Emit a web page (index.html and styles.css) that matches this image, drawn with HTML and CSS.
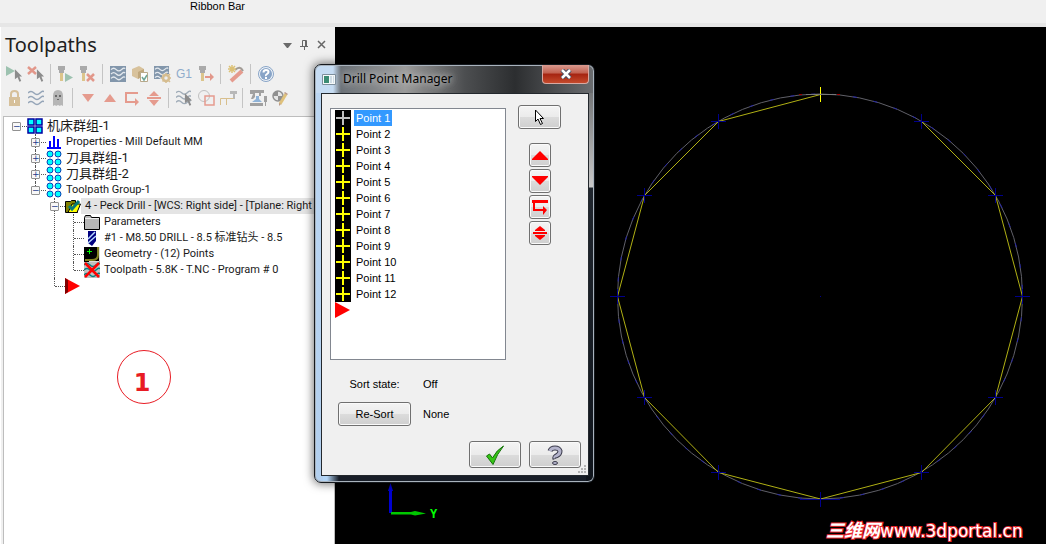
FILE: index.html
```html
<!DOCTYPE html>
<html lang="en">
<head>
<meta charset="utf-8">
<title>Toolpaths</title>
<link rel="stylesheet" href="styles.css">
</head>
<body>
<svg class="defs" aria-hidden="true">
  <defs>
    <symbol id="cursor" viewBox="0 0 10 15"><path d="M1 0v11l3-2 2 5 2-1-2-5h3z"/></symbol>
    <symbol id="mill" viewBox="0 0 8 16"><path fill="#aaa" d="M0 0h7v4H6v3H1V4H0z"/><path fill="#dcc58b" d="M2 7h3v8H2z"/></symbol>
    <symbol id="plus" viewBox="0 0 16 16"><path fill="#000" d="M0 0h16v16H0z"/><path fill="none" stroke="currentColor" stroke-width="2" d="M8 1v14M1 8h14"/></symbol>
    <symbol id="grp" viewBox="0 0 16 16"><g fill="#0ff" stroke="#0a3fb5"><circle cx="4" cy="4" r="3"/><circle cx="12" cy="4" r="3"/><circle cx="4" cy="12" r="3"/><circle cx="12" cy="12" r="3"/></g></symbol>
    <symbol id="waves" viewBox="0 0 16 16"><path fill="none" stroke="currentColor" stroke-width="1.5" d="M0 3q3-3 6 0t6 0t4-1M0 8q3-3 6 0t6 0t4-1M0 13q3-3 6 0t6 0t4-1"/></symbol>
  </defs>
</svg>
<header class="ribbon">Ribbon Bar</header>
<main class="workspace">
  <aside class="panel">
    <div class="panel-head">
      <h1>Toolpaths</h1>
      <div class="panel-tools">
        <button aria-label="Menu"><svg viewBox="0 0 10 10"><path fill="#6a6a6a" d="M0 3h9L5 8H4z"/></svg></button>
        <button aria-label="Pin"><svg viewBox="0 0 10 10"><path fill="none" stroke="#666" d="M2.500 6V.5h4V6M5.500 1v5M0 6.500h8M4.500 7v3"/></svg></button>
        <button aria-label="Close"><svg viewBox="0 0 10 10"><path stroke="#666" stroke-width="1.500" d="M1 1l7 7M8 1L1 8"/></svg></button>
      </div>
    </div>
    <div class="toolbar">
      <button aria-label="Select all"><svg viewBox="0 0 18 18"><path fill="#9dc2b0" d="M1 1l9 5-9 5z"/><use href="#cursor" x="9" y="4" width="9" height="14" fill="#8c8c8c"/></svg></button>
      <button aria-label="Select dirty"><svg viewBox="0 0 18 18"><path stroke="#e2978a" stroke-width="2.500" d="M1 2l8 7M9 2L1 9"/><use href="#cursor" x="9" y="4" width="9" height="14" fill="#8c8c8c"/></svg></button>
      <i></i>
      <button aria-label="Regenerate all"><svg viewBox="0 0 18 18"><use href="#mill" x="1" y="1" width="8" height="16"/><path fill="#9dc2b0" d="M8 8l8 4.500L8 17z"/></svg></button>
      <button aria-label="Regenerate dirty"><svg viewBox="0 0 18 18"><use href="#mill" x="1" y="1" width="8" height="16"/><path stroke="#e2978a" stroke-width="2.500" d="M8 9l7 7M15 9l-7 7"/></svg></button>
      <i></i>
      <button aria-label="Backplot"><svg viewBox="0 0 18 18"><path fill="#8296ab" d="M1 1h16v16H1z"/><use href="#waves" x="1" y="2" width="16" height="14" color="#e4e9ee"/></svg></button>
      <button aria-label="Verify"><svg viewBox="0 0 18 18"><path fill="#d8c29c" d="M1 4l7-3 5 3v7l-6 3-6-3z"/><path fill="#c0a77c" d="M7 7l6-3v6l-6 4z"/><path fill="#fff" stroke="#b9a98b" d="M9.500 7.500h7v9h-7z"/><path fill="none" stroke="#6fa597" stroke-width="1.500" d="M11 12l2 3 3-5"/></svg></button>
      <button aria-label="Simulate"><svg viewBox="0 0 18 18"><path fill="#8296ab" d="M1 1h15v8H9v5H1z"/><use href="#waves" x="1" y="2" width="15" height="13" color="#e4e9ee"/><circle cx="13" cy="13" r="3" fill="none" stroke="#d6bd90" stroke-width="2.500"/><path stroke="#d6bd90" stroke-width="1.500" d="M13 8v2M13 16v2M8 13h2M16 13h2M9.500 9.500l1.500 1.500M15 15l2 2M9.500 16.500L11 15M15 11l2-2"/></svg></button>
      <button aria-label="Post" class="g1">G1</button>
      <button aria-label="High feed"><svg viewBox="0 0 18 18"><use href="#mill" x="2" y="1" width="8" height="16"/><path fill="#e2978a" d="M8 11h5V8l4 4-4 4v-3H8z"/></svg></button>
      <i></i>
      <button aria-label="Wizard"><svg viewBox="0 0 18 18"><path stroke="#e59b8e" stroke-width="4" d="M4 16L15 6"/><path fill="none" stroke="#a29c96" stroke-width="2" d="M8 5q5-5 8 1"/><path stroke="#dcc176" stroke-width="1.500" d="M1 4h8M5 0v8M2 1l6 6M8 1L2 7"/></svg></button>
      <i></i>
      <button aria-label="Help"><svg viewBox="0 0 18 18"><circle cx="9" cy="9" r="7.500" fill="#eef3f8" stroke="#88a4c7"/><circle cx="9" cy="9" r="6" fill="#88a4c7"/><path fill="none" stroke="#fff" stroke-width="2" d="M6.500 7.500q0-2.500 2.500-2.500t2.500 2q0 1-1.500 2T9 11M9 12v2"/></svg></button>
    </div>
    <div class="toolbar">
      <button aria-label="Lock"><svg viewBox="0 0 18 18"><path fill="none" stroke="#d6c09a" stroke-width="2" d="M6 9V5q0-3 3.500-3T13 5v4"/><path fill="#d6c09a" d="M4 8h11v9H4z"/><path fill="#fff" d="M9 11h1v3H9z"/></svg></button>
      <button aria-label="Display"><svg viewBox="0 0 18 18"><use href="#waves" x="1" y="1" width="16" height="16" color="#95a5b8"/></svg></button>
      <button aria-label="Ghost"><svg viewBox="0 0 18 18"><path fill="#b6b6b6" d="M4 17V7q0-6 5-6t5 6v10l-2-1-1 1-2-1-2 1-1-1z"/><path fill="#6a6a6a" d="M6 6h2v2H6zM10 6h2v2h-2zM8 10h2v1H8z"/></svg></button>
      <i></i>
      <button aria-label="Move down"><svg viewBox="0 0 18 18"><path fill="#e59b8e" d="M3 5h12l-6 8z"/></svg></button>
      <button aria-label="Move up"><svg viewBox="0 0 18 18"><path fill="#e59b8e" d="M3 13h12L9 5z"/></svg></button>
      <button aria-label="Insert position"><svg viewBox="0 0 18 18"><path fill="none" stroke="#e59b8e" stroke-width="2" d="M15 4H3v9h10"/><path fill="#e59b8e" d="M12 9l4 4-4 4z"/></svg></button>
      <button aria-label="Scroll to insert"><svg viewBox="0 0 18 18"><path fill="#e59b8e" d="M4 7h10L9 2zM2 8h14v2H2zM4 11h10l-5 6z"/></svg></button>
      <i></i>
      <button aria-label="Display selected"><svg viewBox="0 0 18 18"><use href="#waves" x="1" y="1" width="15" height="15" color="#a0acb8"/><use href="#cursor" x="9" y="4" width="9" height="14" fill="#8c8c8c"/></svg></button>
      <button aria-label="Associated geometry"><svg viewBox="0 0 18 18"><circle cx="7" cy="7" r="5.500" fill="none" stroke="#c0c0c0"/><path fill="none" stroke="#e59b8e" stroke-width="1.500" d="M8 7h9v9H8z"/></svg></button>
      <button aria-label="Tool position"><svg viewBox="0 0 18 18"><path fill="#b8b8b8" d="M11 2h7v3h-2v5h-2V5h-3z"/><path fill="none" stroke="#d8bf8d" d="M1.500 16V9.500h13M7.500 10v6"/></svg></button>
      <i></i>
      <button aria-label="Machine"><svg viewBox="0 0 18 18"><path fill="#a0a0a0" d="M1 1h14v3h-3v3h-2V4H6v4l-2 2H2l2-5H1zM1 14h13v3H1zM15 7h3v6h-1v4h-1v-4h-1z"/><path fill="#8fb3d8" d="M7 7h3v3l3 3H3l4-3z"/></svg></button>
      <button aria-label="Edit"><svg viewBox="0 0 18 18"><circle cx="7" cy="7" r="5" fill="#e6e6e6" stroke="#909090" stroke-width="1.500"/><path fill="#909090" d="M7 7V2q-4 0-5 5zM7 7v5q4 0 5-5z"/><path stroke="#dfc17c" stroke-width="3" d="M15 5L9 15"/><path fill="#b98" d="M14 3l3 2-1 1-3-2zM8 14l2 1-2 2z"/></svg></button>
    </div>
    <div class="tree-box">
      <ul class="tree">
        <li>
          <div class="row"><button class="exp">−</button><svg class="ico" viewBox="0 0 16 16"><path fill="#0ff" stroke="#0000a0" stroke-width="1.500" d="M1 1h6v6H1zM9 1h6v6H9zM1 9h6v6H1zM9 9h6v6H9z"/></svg><span class="cjk">机床群组-1</span></div>
          <ul>
            <li><div class="row"><button class="exp">+</button><svg class="ico" viewBox="0 0 16 16"><path fill="#00f" d="M1 13h14v2H1zM3 7h2v6H3zM7 2h2v11H7zM11 5h2v8h-2z"/></svg><span>Properties - Mill Default MM</span></div></li>
            <li><div class="row"><button class="exp">+</button><svg class="ico"><use href="#grp"/></svg><span class="cjk">刀具群组-1</span></div></li>
            <li><div class="row"><button class="exp">+</button><svg class="ico"><use href="#grp"/></svg><span class="cjk">刀具群组-2</span></div></li>
            <li>
              <div class="row"><button class="exp">−</button><svg class="ico"><use href="#grp"/></svg><span>Toolpath Group-1</span></div>
              <ul>
                <li>
                  <div class="row current"><button class="exp">−</button><svg class="ico" viewBox="0 0 16 16"><path fill="#808000" stroke="#000" d="M.5 3.500h5l1-1h4v2h2v10H.5z"/><path fill="#ff0" stroke="#000" d="M3 14.500L7 6h8.500L12 14.500z"/><path fill="none" stroke="#087a7a" stroke-width="3" d="M4 8l3 3 7-8"/></svg><span>4 - Peck Drill - [WCS: Right side] - [Tplane: Right</span></div>
                  <ul>
                    <li><div class="row"><b></b><svg class="ico" viewBox="0 0 16 16"><path fill="#b8b8b8" stroke="#000" d="M.5 3.500l1-2h5l1 2h8v12H.5z"/><path stroke="#eee" d="M1 4.500h14"/></svg><span>Parameters</span></div></li>
                    <li><div class="row"><b></b><svg class="ico" viewBox="0 0 16 16"><path fill="#000080" d="M4 1h8v10l-4 5-4-3z"/><path stroke="#b8d8ff" stroke-width="1.500" d="M4 9l7-7M4 13l8-7"/></svg><span>#1 - M8.50 DRILL - 8.5 标准钻头 - 8.5</span></div></li>
                    <li><div class="row"><b></b><svg class="ico" viewBox="0 0 16 16"><path d="M0 1h16v15H0z"/><path stroke="#0f0" d="M5.500 3v5M3 5.500h5"/><path fill="none" stroke="#808020" stroke-width="2" d="M14 1v8q0 5-6 5H1"/><path fill="none" stroke="#ddd" d="M15.500 1v14.500H5"/></svg><span>Geometry - (12) Points</span></div></li>
                    <li><div class="row"><b></b><svg class="ico" viewBox="0 0 16 16"><path fill="#c0c0c0" d="M0 0h16v16H0z"/><use href="#waves" color="#008080"/><path stroke="#f00" stroke-width="2.500" d="M1 1l14 14M15 1L1 15"/></svg><span>Toolpath - 5.8K - T.NC - Program # 0</span></div></li>
                  </ul>
                </li>
                <li><div class="row"><b></b><svg class="ico" viewBox="0 0 16 16"><path fill="#f00" d="M0 0l15 8-15 8z"/><path fill="#800000" d="M0 0l3 2v12l-3 2z"/></svg></div></li>
              </ul>
            </li>
          </ul>
        </li>
      </ul>
    </div>
    <div class="mark">1</div>
  </aside>
  <section class="view">
    <svg class="scene" viewBox="335 27 711 517" preserveAspectRatio="xMinYMin meet">
      <circle cx="820" cy="296.500" r="202.500" fill="none" stroke="#606068"/>
      <circle cx="820" cy="296.500" r="202.500" fill="none" stroke="#2222a8" stroke-dasharray="4 17"/>
      <path fill="none" stroke="#b0b014" d="M820.500 94.500L718.500 121.500L644.500 195.500L617.500 296.500L644.500 397.500L718.500 472.500L820.500 499L921.500 472.500L995.500 397.500L1022.500 296.500L995.500 195.500L921.500 121.500"/>
      <path stroke="#00008c" d="M711 121.500h15M718.500 114v15M914 121.500h15M921.500 114v15M637 195.500h15M644.500 188v15M988 195.500h15M995.500 188v15M610 296.500h15M617.500 289v15M1015 296.500h15M1022.500 289v15M637 397.500h15M644.500 390v15M988 397.500h15M995.500 390v15M711 472.500h15M718.500 465v15M914 472.500h15M921.500 465v15M800 499.500h40M820.500 492v15M820 296.500h1"/>
      <path stroke="#ff0" d="M820.500 87v15"/>
      <path stroke="#777" d="M806 94.500h30"/>
      <path stroke="#a00000" d="M799 94.500h3M837 94.500h3"/>
      <path fill="#0000d0" d="M389 513V491h-1l2.500-8 2.500 8h-1v22z"/>
      <path fill="#00c800" d="M391 512h20l4-1 11 2.500-11 2-4-1h-20z"/>
      <text x="430" y="518" class="axis">Y</text>
      <text x="826" y="537" class="brand"><tspan class="brand-cjk">三维网</tspan>www.3dportal.cn</text>
    </svg>
  </section>
</main>

<section class="dialog" role="dialog" aria-labelledby="dlg-title">
  <div class="titlebar">
    <svg class="app" viewBox="0 0 14 11"><path fill="#f5f8fa" stroke="#7e8f9c" d="M.5.5h13v10H.5z"/><path fill="#3c8c74" d="M2 2h5v7H2z"/><path fill="#cfdde6" d="M8 2h2v7H8zM11 2h1v7h-1z"/></svg>
    <h2 id="dlg-title">Drill Point Manager</h2>
    <button class="close" aria-label="Close"><svg viewBox="0 0 12 10"><path stroke="#444c60" stroke-width="4.500" d="M2 1l8 8M10 1L2 9"/><path stroke="#fff" stroke-width="2.500" d="M2 1l8 8M10 1L2 9"/></svg></button>
  </div>
  <div class="client">
    <div class="top">
      <ul class="points" role="listbox" aria-label="Points">
        <li class="sel"><svg><use href="#plus"/></svg><span>Point 1</span></li>
        <li><svg><use href="#plus"/></svg><span>Point 2</span></li>
        <li><svg><use href="#plus"/></svg><span>Point 3</span></li>
        <li><svg><use href="#plus"/></svg><span>Point 4</span></li>
        <li><svg><use href="#plus"/></svg><span>Point 5</span></li>
        <li><svg><use href="#plus"/></svg><span>Point 6</span></li>
        <li><svg><use href="#plus"/></svg><span>Point 7</span></li>
        <li><svg><use href="#plus"/></svg><span>Point 8</span></li>
        <li><svg><use href="#plus"/></svg><span>Point 9</span></li>
        <li><svg><use href="#plus"/></svg><span>Point 10</span></li>
        <li><svg><use href="#plus"/></svg><span>Point 11</span></li>
        <li><svg><use href="#plus"/></svg><span>Point 12</span></li>
        <li><svg viewBox="0 0 16 16"><path fill="#f00" d="M0 0l15 8-15 8z"/></svg></li>
      </ul>
      <div class="side">
        <button class="btn pick" aria-label="Pick point"><svg viewBox="0 0 16 16"><path fill="#fff" stroke="#000" d="M3.500 1v11.500l2.500-2.500 2.500 5.500 2-1-2.500-5h3.500z"/></svg></button>
        <button class="btn mini" aria-label="Move up"><svg viewBox="0 0 16 16"><path fill="#f00" d="M0 12l8-8 8 8v1H0z"/></svg></button>
        <button class="btn mini" aria-label="Move down"><svg viewBox="0 0 16 16"><path fill="#f00" d="M0 4l8 8 8-8V3H0z"/></svg></button>
        <button class="btn mini" aria-label="Move insertion arrow"><svg viewBox="0 0 16 16"><path fill="#f00" d="M0 1h16v3H3v6h8V7l4 4-4 5v-4H1V4H0z"/></svg></button>
        <button class="btn mini" aria-label="Position insertion arrow"><svg viewBox="0 0 16 16"><path fill="#f00" d="M3 5l5-4 5 4v1H3zM1 7h14v2H1zM3 10h10v1l-5 4-5-4z"/></svg></button>
      </div>
    </div>
    <div class="sort">
      <span class="lab">Sort state:</span><span>Off</span>
      <button class="btn">Re-Sort</button><span>None</span>
    </div>
    <div class="foot">
      <button class="btn" aria-label="OK"><svg viewBox="0 0 20 20"><path fill="#36c516" stroke="#15730a" d="M1.500 11l3-2 3 4q4-8 11-12Q12 9 8 19.500z"/></svg></button>
      <button class="btn" aria-label="Help"><svg viewBox="0 0 20 20"><path fill="none" stroke="#3c3c4c" stroke-width="5" d="M5 6q1-3 5-3t5 3q0 3-3 4.500T10 14"/><path fill="none" stroke="#b4b4cc" stroke-width="3" d="M5 6q1-3 5-3t5 3q0 3-3 4.500T10 13"/><ellipse cx="10" cy="18" rx="2.500" ry="1.500" fill="#b4b4cc" stroke="#3c3c4c"/></svg></button>
    </div>
    <svg class="grip" viewBox="0 0 9 9"><path fill="#b5b5b5" d="M6 0h2v2H6zM6 3h2v2H6zM3 3h2v2H3zM6 6h2v2H6zM3 6h2v2H3zM0 6h2v2H0z"/></svg>
  </div>
</section>
</body>
</html>
```
FILE: styles.css
```css
* { box-sizing: border-box; }
body {
  margin: 0; min-height: 100vh; position: relative; overflow: hidden;
  display: flex; flex-direction: column;
  background: #f0f0f0; color: #000;
  font: 11px/16px "Liberation Sans", "Noto Sans CJK SC", sans-serif;
}
ul { list-style: none; margin: 0; padding: 0; }
h1, h2 { margin: 0; font-weight: 400; }
button { font: inherit; color: inherit; padding: 0; border: 0; background: none; }
svg { display: block; flex: none; }
.defs { position: absolute; width: 0; height: 0; }

.ribbon { height: 27px; padding: 0 190px; line-height: 12px; border-bottom: 4px solid #e6e6e6; white-space: nowrap; }
.workspace { flex: 1; display: grid; grid-template-columns: 335px 1fr; }

.panel { position: relative; display: flex; flex-direction: column; min-width: 0; border-left: 1px solid #fff; font-family: Roboto, "Noto Sans CJK SC", sans-serif; }
.panel-head { display: flex; align-items: center; justify-content: space-between; height: 35px; padding: 0 8px 0 4px; }
.panel-head h1 { font: 20px/32px "Noto Sans", sans-serif; color: #1e1e1e; }
.panel-tools { display: flex; gap: 7px; }
.panel-tools svg { width: 10px; height: 10px; }
.toolbar { display: flex; align-items: center; height: 24px; padding-left: 2px; }
.toolbar button { width: 22px; height: 24px; display: grid; place-items: center; flex: none; }
.toolbar svg { width: 18px; height: 18px; }
.toolbar i { width: 1px; height: 20px; margin: 0 4px 0 3px; background: #c4c4c4; flex: none; }
.toolbar .g1 { font: 12px/16px "Liberation Sans", sans-serif; color: #8fabcb; }

.tree-box { flex: 1; margin: 6px 0 0 2px; padding: 1px 0 0 7px; background: #fff; border: 1px solid #bdbdbd; border-bottom: 0; overflow: hidden; }
.tree ul { margin-left: 19px; }
.tree li { position: relative; }
.tree li::before { content: ""; position: absolute; left: 5px; top: 0; bottom: 0; border-left: 1px dotted #555; }
.tree li:last-child::before { bottom: auto; height: 8px; }
.tree > li::before { display: none; }
.row { position: relative; display: flex; align-items: center; height: 16px; white-space: nowrap; color: #1a1a1a; }
.row::before { content: ""; position: absolute; left: 6px; top: 8px; width: 10px; border-top: 1px dotted #555; }
.row b { width: 16px; flex: none; }
.exp { position: relative; width: 9px; height: 9px; margin: 0 6px 0 1px; flex: none; display: grid; place-items: center; border: 1px solid #919191; border-radius: 1px; background: #f8f8f8; color: #233a8c; font: 9px/7px "DejaVu Sans", sans-serif; }
.ico { position: relative; width: 16px; height: 16px; }
.row span { padding: 0 4px; line-height: 16px; }
.current span { background: #e4e4e4; flex: 1 0 auto; }
.row .cjk { font-size: 13px; }
.mark { position: absolute; left: 116px; top: 323px; width: 54px; height: 54px; padding: 8px 4px 0 0; border: 1px solid #e81c24; border-radius: 50%; color: #e81c24; text-align: center; font: bold 24px/48px "DejaVu Sans", sans-serif; }

.view { background: #000; min-width: 0; }
.scene { width: 100%; }
.axis { font: bold 12px "DejaVu Sans Mono", monospace; fill: #0f0; }
.brand { font: 17px "DejaVu Sans", sans-serif; fill: #fff; stroke: #e8252c; stroke-width: 2px; paint-order: stroke; }
.brand-cjk { font: italic bold 18px "Noto Sans CJK SC", sans-serif; }

.dialog {
  position: absolute; left: 314px; top: 64px; width: 281px; padding: 0 5px 6px 6px;
  border: 1px solid #15191e; border-radius: 7px;
  background:
    linear-gradient(90deg, #c6dcf3 0 18px, #6b7177 26px, #9a9a9a 90px, #4c4e50 150px, #2c2e30 200px, #6b6d70) 0 0 / 100% 28px no-repeat,
    linear-gradient(#bcd7f3, #b2cfee) 0 0 / 8px 100% no-repeat,
    linear-gradient(#5c5e60, #c8c8c8 122px, #20262e 123px, #10151c) 100% 0 / 8px 100% no-repeat,
    linear-gradient(90deg, #b2d4f5 12px, #181e28 24px) 0 100% / 100% 8px no-repeat;
  box-shadow: inset 0 0 0 1px #a9b3bd, 0 0 10px 1px rgba(0,0,0,.55);
}
.titlebar { display: flex; align-items: center; height: 28px; }
.app { width: 14px; height: 11px; margin-left: 1px; }
.titlebar h2 { margin-left: 7px; font: 12px/24px "Noto Sans", sans-serif; color: #000; text-shadow: 0 0 6px #ccc, 0 0 10px #bbb; flex: 1; }
.close { align-self: flex-start; width: 47px; height: 19px; display: grid; place-items: center; border: 1px solid #d9a9a2; border-top: 0; border-radius: 0 0 4px 4px; background: linear-gradient(#d99a8f, #c2604f 45%, #a52310 50%, #c44a2c); }
.close svg { width: 12px; height: 10px; }
.client { position: relative; padding: 14px 7px 7px 8px; border: 1px solid #23282d; background: #f0f0f0; }
.top { display: flex; gap: 12px; }
.points { width: 176px; height: 252px; padding: 1px 4px; border: 1px solid #828790; background: #fff; }
.points li { display: flex; gap: 3px; height: 16px; }
.points svg { width: 16px; height: 16px; color: #ff0; }
.points span { padding: 0 2px; }
.points .sel svg { color: #c0c0c0; }
.points .sel span { background: #39f; color: #fff; }
.btn { display: grid; place-items: center; border: 1px solid #707070; border-radius: 3px; background: linear-gradient(#f4f4f4, #ebebeb 50%, #dcdcdc 50%, #cfcfcf); box-shadow: inset 0 0 0 1px #fafafa; }
.side { display: flex; flex-direction: column; align-items: center; gap: 2px; margin-top: -3px; }
.pick { width: 43px; height: 24px; margin-bottom: 12px; }
.mini { width: 22px; height: 24px; }
.btn svg { width: 16px; height: 16px; }
.sort { display: grid; grid-template-columns: 73px auto; column-gap: 12px; row-gap: 10px; align-items: center; padding: 16px 0 0 8px; }
.sort .btn { height: 24px; }
.lab { text-align: center; }
.foot { display: flex; justify-content: flex-end; gap: 8px; padding-top: 15px; }
.foot .btn { width: 52px; height: 27px; }
.foot svg { width: 20px; height: 20px; }
.grip { position: absolute; right: 1px; bottom: 1px; width: 9px; height: 9px; }
```
